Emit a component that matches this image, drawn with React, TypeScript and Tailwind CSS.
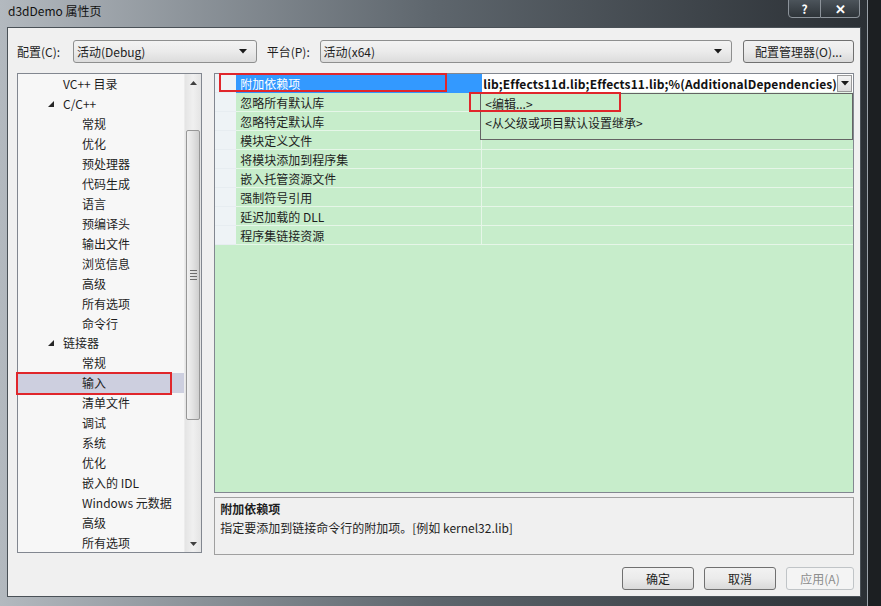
import React from "react";

const font = { fontFamily: '"Noto Sans CJK SC", "Noto Sans", sans-serif' };

type Item = { label: string; level: number; expanded?: boolean; selected?: boolean };

const tree: Item[] = [
  { label: "VC++ 目录", level: 1 },
  { label: "C/C++", level: 1, expanded: true },
  { label: "常规", level: 2 },
  { label: "优化", level: 2 },
  { label: "预处理器", level: 2 },
  { label: "代码生成", level: 2 },
  { label: "语言", level: 2 },
  { label: "预编译头", level: 2 },
  { label: "输出文件", level: 2 },
  { label: "浏览信息", level: 2 },
  { label: "高级", level: 2 },
  { label: "所有选项", level: 2 },
  { label: "命令行", level: 2 },
  { label: "链接器", level: 1, expanded: true },
  { label: "常规", level: 2 },
  { label: "输入", level: 2, selected: true },
  { label: "清单文件", level: 2 },
  { label: "调试", level: 2 },
  { label: "系统", level: 2 },
  { label: "优化", level: 2 },
  { label: "嵌入的 IDL", level: 2 },
  { label: "Windows 元数据", level: 2 },
  { label: "高级", level: 2 },
  { label: "所有选项", level: 2 },
];

const props = [
  "附加依赖项",
  "忽略所有默认库",
  "忽略特定默认库",
  "模块定义文件",
  "将模块添加到程序集",
  "嵌入托管资源文件",
  "强制符号引用",
  "延迟加载的 DLL",
  "程序集链接资源",
];

function DownTri({ className = "" }: { className?: string }) {
  return (
    <svg width="8" height="5" viewBox="0 0 8 5" className={className}>
      <path d="M0 0 H8 L4 4.5 Z" fill="#1a1a1a" />
    </svg>
  );
}

function Combo({ text, width }: { text: string; width: string }) {
  return (
    <div
      className={`${width} h-[23px] rounded-[3px] border border-[#8e8f8f] bg-gradient-to-b from-[#f3f3f3] via-[#ebebeb] to-[#dcdcdc] flex items-center pl-[3px] pr-[9px] text-[12px] text-[#1e1e1e]`}
    >
      <span className="flex-1 leading-[17px]">{text}</span>
      <DownTri />
    </div>
  );
}

function Btn({ text, width, disabled }: { text: string; width: string; disabled?: boolean }) {
  return (
    <div
      className={`${width} h-[23px] rounded-[3px] border flex items-center justify-center text-[12px] leading-[17px] ${
        disabled
          ? "border-[#c0c4c7] bg-[#f4f4f4] text-[#8d8d8d]"
          : "border-[#707070] bg-gradient-to-b from-[#f2f2f2] via-[#ebebeb] to-[#d9d9d9] text-[#1e1e1e]"
      }`}
    >
      {text}
    </div>
  );
}

function ExpandTri() {
  return (
    <svg width="6" height="6" viewBox="0 0 6 6">
      <path d="M6 0 V6 H0 Z" fill="#262626" />
    </svg>
  );
}

export default function App() {
  return (
    <div className="w-[881px] h-[606px] flex bg-[#15181b] overflow-hidden" style={font}>
      <div className="w-[868px] h-full flex flex-col bg-gradient-to-r from-[#b3b9bf] via-[#5e666d] to-[#2b3035] border-r border-[#9aa1a8]">
        {/* title bar */}
        <div className="h-[27px] flex items-start justify-between">
          <div className="pl-[8px] pt-[2px] text-[12px] leading-[17px] text-[#111]">d3dDemo 属性页</div>
          <div className="flex mr-[7px] -mt-[1px]">
            <div className="w-[33px] h-[19px] border border-[#8c939a] rounded-bl-[4px] bg-gradient-to-b from-[#4c545b] to-[#2e3439] flex items-center justify-center text-white text-[12px] font-bold leading-none">
              ?
            </div>
            <div className="w-[39px] h-[19px] border border-l-0 border-[#8c939a] rounded-br-[4px] bg-gradient-to-b from-[#4c545b] to-[#2e3439] flex items-center justify-center text-white text-[13px] font-bold leading-none">
              ✕
            </div>
          </div>
        </div>
        {/* client */}
        <div className="ml-[7px] mr-[6px] mb-[9px] h-[570px] border border-[#4a5157] bg-[#f0f0f0] pl-[9px] pr-[6px] pt-[12px] pb-[6px] flex flex-col">
          {/* top row */}
          <div className="h-[23px] flex items-center text-[12px] text-[#1e1e1e]">
            <div className="w-[56px] leading-[17px]">配置(C):</div>
            <Combo text="活动(Debug)" width="w-[184px]" />
            <div className="w-[53px] ml-[10px] leading-[17px]">平台(P):</div>
            <Combo text="活动(x64)" width="w-[413px]" />
            <div className="ml-[11px]">
              <Btn text="配置管理器(O)..." width="w-[111px]" />
            </div>
          </div>
          {/* main */}
          <div className="mt-[10px] h-[482px] flex">
            {/* tree */}
            <div className="relative w-[186px] h-[480px] border border-[#828790] bg-[#f7f7f7] flex">
              <div className="flex-1 flex flex-col">
                {tree.map((it, i) => (
                  <div
                    key={i}
                    className={`h-[20px] flex items-center text-[12px] leading-[17px] text-[#1e1e1e] ${
                      it.selected ? "bg-[#cdcfdf]" : ""
                    }`}
                  >
                    {it.level === 1 ? (
                      <>
                        <div className="w-[45px] flex justify-end pr-[9px]">{it.expanded ? <ExpandTri /> : null}</div>
                        <span>{it.label}</span>
                      </>
                    ) : (
                      <span className="pl-[64px]">{it.label}</span>
                    )}
                  </div>
                ))}
              </div>
              {/* scrollbar */}
              <div className="w-[17px] h-full flex flex-col bg-gradient-to-r from-[#e4e4e4] via-[#f0f0f0] to-[#e4e4e4] border-l border-[#ececec]">
                <div className="h-[17px] flex items-center justify-center">
                  <svg width="7" height="4" viewBox="0 0 7 4">
                    <path d="M0 4 H7 L3.5 0 Z" fill="#404040" />
                  </svg>
                </div>
                <div className="h-[39px]" />
                <div className="mx-[1px] h-[290px] rounded-[2px] border border-[#979797] bg-gradient-to-r from-[#f1f1f1] via-[#e2e2e2] to-[#cfcfcf] flex flex-col items-center justify-center gap-[2px]">
                  <div className="w-[7px] h-[1px] bg-[#6e6e6e]" />
                  <div className="w-[7px] h-[1px] bg-[#6e6e6e]" />
                  <div className="w-[7px] h-[1px] bg-[#6e6e6e]" />
                  <div className="w-[7px] h-[1px] bg-[#6e6e6e]" />
                </div>
                <div className="flex-1" />
                <div className="h-[17px] flex items-center justify-center">
                  <svg width="7" height="4" viewBox="0 0 7 4">
                    <path d="M0 0 H7 L3.5 4 Z" fill="#404040" />
                  </svg>
                </div>
              </div>
              {/* annotation */}
              <div className="absolute left-[-2px] top-[298px] w-[156px] h-[23px] border-2 border-[#e0262b]" />
            </div>
            {/* right column */}
            <div className="ml-[12px] w-[640px] flex flex-col">
              <div className="relative h-[420px] border border-[#828790] bg-[#c7edcb] flex flex-col">
                {props.map((p, i) => (
                  <div key={i} className="h-[19px] flex text-[12px] leading-[17px]">
                    <div className="w-[21px] h-full bg-[#eef3f6] border-b border-[#e7edf1]" />
                    <div
                      className={`w-[245px] h-full pl-[4px] flex items-center border-b ${
                        i === 0 ? "bg-[#3399ff] text-white border-[#3399ff]" : "text-[#1e1e1e] border-[#e6f6e8]"
                      }`}
                    >
                      {p}
                    </div>
                    <div className={`w-[1px] h-full ${i === 0 ? "bg-[#3399ff]" : "bg-[#e6f6e8]"}`} />
                    <div className="flex-1 h-full border-b border-[#e6f6e8]">
                      {i === 0 ? (
                        <div className="h-full bg-white flex items-center pl-[1px] pr-[1px]">
                          <span className="flex-1 font-bold text-[12px] tracking-[0.12px] text-[#111] whitespace-nowrap overflow-hidden">
                            lib;Effects11d.lib;Effects11.lib;%(AdditionalDependencies)
                          </span>
                          <div className="w-[15px] h-[17px] border border-[#9a9a9a] bg-gradient-to-b from-[#f4f4f4] to-[#dcdcdc] flex items-center justify-center">
                            <DownTri />
                          </div>
                        </div>
                      ) : null}
                    </div>
                  </div>
                ))}
                {/* dropdown list */}
                <div className="absolute left-[265px] top-[19px] w-[373px] h-[47px] border border-[#646464] bg-[#c7edcb] text-[12px] leading-[17px] text-[#1e1e1e] flex flex-col pl-[4px]">
                  <div className="h-[19px] flex items-center">&lt;编辑...&gt;</div>
                  <div className="h-[19px] flex items-center">&lt;从父级或项目默认设置继承&gt;</div>
                </div>
                {/* annotations */}
                <div className="absolute left-[4px] top-[-1px] w-[228px] h-[19px] border-2 border-[#e0262b]" />
                <div className="absolute left-[254px] top-[18px] w-[152px] h-[20px] border-2 border-[#e0262b]" />
              </div>
              <div className="mt-[4px] h-[58px] border border-[#a0a0a0] bg-[#f0f0f0] pl-[5px] pt-[1px] text-[12px] leading-[19px] text-[#1e1e1e]">
                <div className="font-bold">附加依赖项</div>
                <div>指定要添加到链接命令行的附加项。[例如 kernel32.lib]</div>
              </div>
            </div>
          </div>
          {/* buttons */}
          <div className="mt-[12px] h-[23px] flex justify-end gap-[10px]">
            <Btn text="确定" width="w-[72px]" />
            <Btn text="取消" width="w-[72px]" />
            <Btn text="应用(A)" width="w-[68px]" disabled />
          </div>
        </div>
      </div>
      <div className="flex-1 bg-[#1c1f22]" />
    </div>
  );
}
